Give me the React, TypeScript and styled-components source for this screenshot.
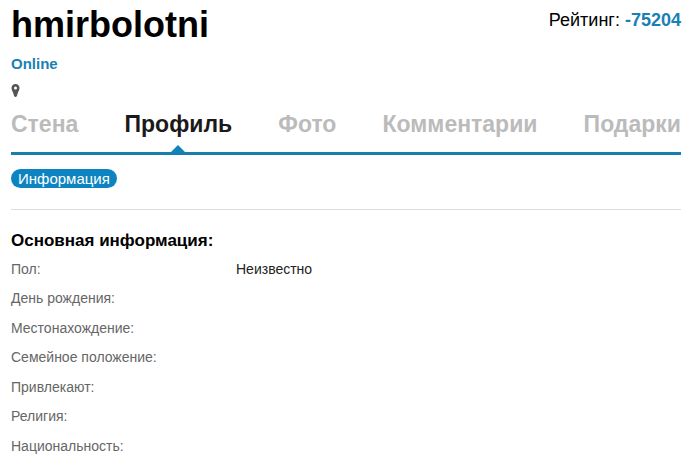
import React from 'react';
import styled, { createGlobalStyle } from 'styled-components';

const GlobalStyle = createGlobalStyle`
  * { box-sizing: border-box; }
  body {
    margin: 0;
    background: #fff;
    color: #222;
    font-family: "Liberation Sans", Arial, sans-serif;
  }
`;

const Page = styled.main`
  padding: 0 16px 8px 11px;
`;

const Header = styled.header`
  display: flex;
  justify-content: space-between;
  align-items: flex-start;
`;

const UserName = styled.h1`
  margin: 3px 0 0;
  font-size: 36px;
  line-height: 44px;
  font-weight: 700;
  color: #000;
`;

const Rating = styled.div`
  margin-top: 8px;
  font-size: 18px;
  line-height: 24px;
  color: #000;
`;

const RatingValue = styled.strong`
  color: #1a80b4;
`;

const Status = styled.div`
  margin-top: 7px;
  font-size: 15px;
  line-height: 20px;
  font-weight: 700;
  color: #1a80b4;
`;

const PinIcon = styled.svg`
  display: block;
  margin-top: 10px;
`;

const Tabs = styled.nav`
  display: flex;
  justify-content: space-between;
  margin-top: 11px;
  border-bottom: 3px solid #177fae;
`;

const Tab = styled.a<{ $active?: boolean }>`
  position: relative;
  height: 44px;
  font-size: 23px;
  line-height: 32px;
  font-weight: 700;
  text-decoration: none;
  color: ${(p) => (p.$active ? '#1a1a1a' : '#bbb')};

  &::after {
    content: '';
    display: ${(p) => (p.$active ? 'block' : 'none')};
    position: absolute;
    bottom: 0;
    left: 50%;
    margin-left: -7px;
    border: 7px solid transparent;
    border-top-width: 0;
    border-bottom-color: #0d84bd;
  }
`;

const SubNav = styled.nav`
  display: flex;
  padding: 14px 0 21px;
  border-bottom: 1px solid #ddd;
`;

const Pill = styled.a`
  padding: 0 7px;
  border-radius: 10px;
  background: #0d84c1;
  color: #fff;
  font-size: 15px;
  line-height: 19px;
  text-decoration: none;
`;

const SectionTitle = styled.h2`
  margin: 21px 0 4px;
  font-size: 17px;
  line-height: 20px;
  font-weight: 700;
  color: #000;
`;

const Details = styled.dl`
  display: grid;
  grid-template-columns: 225px 1fr;
  grid-auto-rows: 29px 30px;
  margin: 0;
  font-size: 14px;
  line-height: 29px;
`;

const Term = styled.dt`
  color: #666;
`;

const Value = styled.dd`
  margin: 0;
  color: #222;
`;

const tabs = ['Стена', 'Профиль', 'Фото', 'Комментарии', 'Подарки'];

const details = [
  ['Пол:', 'Неизвестно'],
  ['День рождения:', ''],
  ['Местонахождение:', ''],
  ['Семейное положение:', ''],
  ['Привлекают:', ''],
  ['Религия:', ''],
  ['Национальность:', ''],
];

export default function App() {
  return (
    <>
      <GlobalStyle />
      <Page>
        <Header>
          <UserName>hmirbolotni</UserName>
          <Rating>
            Рейтинг: <RatingValue>-75204</RatingValue>
          </Rating>
        </Header>
        <Status>Online</Status>
        <PinIcon width="9" height="13" viewBox="0 0 9 13" aria-hidden="true">
          <path
            fillRule="evenodd"
            fill="#555"
            d="M4.500 0C2 0 .5 1.700 .5 4C.5 6.500 2.200 7.800 2.800 11C3 12.300 3.600 13 4.500 13S6 12.300 6.200 11C6.800 7.800 8.500 6.500 8.500 4C8.500 1.700 7 0 4.500 0ZM4.500 2.500A1.500 1.500 0 1 1 4.500 5.500A1.500 1.500 0 0 1 4.500 2.500Z"
          />
        </PinIcon>
        <Tabs>
          {tabs.map((name) => (
            <Tab key={name} href="#" $active={name === 'Профиль'}>
              {name}
            </Tab>
          ))}
        </Tabs>
        <SubNav>
          <Pill href="#">Информация</Pill>
        </SubNav>
        <SectionTitle>Основная информация:</SectionTitle>
        <Details>
          {details.map(([term, value]) => (
            <React.Fragment key={term}>
              <Term>{term}</Term>
              <Value>{value}</Value>
            </React.Fragment>
          ))}
        </Details>
      </Page>
    </>
  );
}
